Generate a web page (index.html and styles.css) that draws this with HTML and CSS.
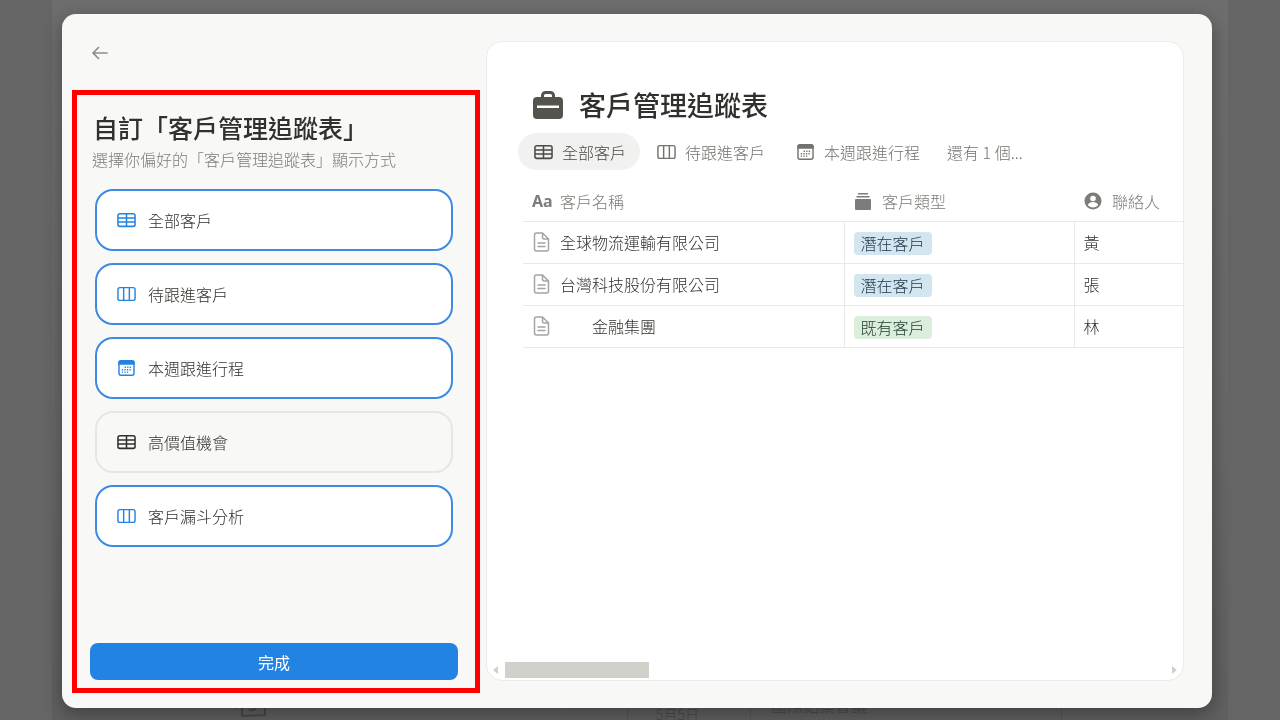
FILE: index.html
```
<!DOCTYPE html>
<html lang="zh-Hant">
<head>
    <meta charset="UTF-8">
    <meta name="viewport" content="width=device-width, initial-scale=1.0">
    <title>客戶管理追蹤表</title>
    <link rel="stylesheet" href="styles.css">
</head>
<body>
    <!-- shared icons -->
    <svg class="sprite" aria-hidden="true">
        <symbol id="icon-table" viewBox="0 0 20 16">
            <path d="M3 1.3h14a2 2 0 0 1 2 2v9.400a2 2 0 0 1-2 2H3a2 2 0 0 1-2-2V3.300a2 2 0 0 1 2-2zM1 5.800h18M1 10.200h18M10 1.300v13.400" fill="none" stroke="currentColor" stroke-width="1.6"/>
        </symbol>
        <symbol id="icon-board" viewBox="0 0 20 16">
            <path d="M3 1.300h14a2 2 0 0 1 2 2v9.400a2 2 0 0 1-2 2H3a2 2 0 0 1-2-2V3.300a2 2 0 0 1 2-2zM7 1.300v13.400M13 1.300v13.400" fill="none" stroke="currentColor" stroke-width="1.5"/>
        </symbol>
        <symbol id="icon-calendar" viewBox="0 0 20 18">
            <rect x="2.1" y="1.400" width="15.800" height="15.200" rx="2" fill="none" stroke="currentColor" stroke-width="1.5"/>
            <path d="M1.400 5.500V3a2 2 0 0 1 2-2h13.200a2 2 0 0 1 2 2v2.500z" fill="currentColor"/>
            <path d="M8 8.200h7M5 10.800h10M5 13.400h7" fill="none" stroke="currentColor" stroke-width="1.4" stroke-dasharray="1.4 1.3"/>
        </symbol>
        <symbol id="icon-page" viewBox="0 0 16 20">
            <path d="M3 1h6l6 6v10a2 2 0 0 1-2 2H3a2 2 0 0 1-2-2V3a2 2 0 0 1 2-2zM9 1v4.500A1.500 1.500 0 0 0 10.500 7H15M4.500 11h7M4.500 14.500h7" fill="none" stroke="currentColor" stroke-width="1.5" stroke-linecap="round" stroke-linejoin="round"/>
        </symbol>
    </svg>

    <div class="behind" aria-hidden="true">
        <div class="behind-row">
            <span class="behind-icon"><svg viewBox="0 0 32 22" width="32" height="22"><path d="M2 4v9M8 2v18l23-1V2M15 13c2 2 7 2 7-3" fill="none" stroke="currentColor" stroke-width="2"/></svg></span>
            <span>5月5日</span>
            <span>國際鋁業會議</span>
            <span></span>
        </div>
    </div>

    <main class="modal">
        <div class="side">
            <button class="back" aria-label="返回">
                <svg viewBox="0 0 16 14" width="16" height="14"><path d="M15 7H1.500M6.500 1.500L1 7l5.500 5.500" fill="none" stroke="currentColor" stroke-width="1.700" stroke-linecap="round" stroke-linejoin="round"/></svg>
            </button>
            <section class="setup">
                <h1>自訂「客戶管理追蹤表」</h1>
                <p>選擇你偏好的「客戶管理追蹤表」顯示方式</p>
                <div class="options">
                    <button class="option selected" aria-pressed="true"><svg class="icon"><use href="#icon-table"/></svg>全部客戶</button>
                    <button class="option selected" aria-pressed="true"><svg class="icon"><use href="#icon-board"/></svg>待跟進客戶</button>
                    <button class="option selected" aria-pressed="true"><svg class="icon"><use href="#icon-calendar"/></svg>本週跟進行程</button>
                    <button class="option" aria-pressed="false"><svg class="icon"><use href="#icon-table"/></svg>高價值機會</button>
                    <button class="option selected" aria-pressed="true"><svg class="icon"><use href="#icon-board"/></svg>客戶漏斗分析</button>
                </div>
                <button class="done">完成</button>
            </section>
        </div>

        <section class="preview">
            <h2>
                <svg viewBox="0 0 30 28" width="30" height="28"><path d="M9.500 8V4.500a3 3 0 0 1 3-3h5a3 3 0 0 1 3 3V8" fill="none" stroke="currentColor" stroke-width="3"/><path d="M4 6h22a4 4 0 0 1 4 4v4.500H0V10a4 4 0 0 1 4-4zM0 17h30v7a4 4 0 0 1-4 4H4a4 4 0 0 1-4-4z" fill="currentColor"/><path d="M0 14h4v4H0zM26 14h4v4h-4z" fill="currentColor"/></svg>
                客戶管理追蹤表
            </h2>
            <div class="tabs">
                <button class="tab active"><svg class="icon"><use href="#icon-table"/></svg>全部客戶</button>
                <button class="tab"><svg class="icon"><use href="#icon-board"/></svg>待跟進客戶</button>
                <button class="tab"><svg class="icon"><use href="#icon-calendar"/></svg>本週跟進行程</button>
                <button class="tab">還有 1 個...</button>
            </div>
            <div class="table-wrap">
                <table>
                    <thead>
                        <tr>
                            <th class="col-name"><div class="cell"><b>Aa</b>客戶名稱</div></th>
                            <th class="col-type"><div class="cell"><svg viewBox="0 0 16 18" width="18" height="18"><path d="M3 1h10v1.500H3zM1.500 4h13v1.500h-13zM1 7h14a1 1 0 0 1 1 1v9a1 1 0 0 1-1 1H1a1 1 0 0 1-1-1V8a1 1 0 0 1 1-1z" fill="currentColor"/></svg>客戶類型</div></th>
                            <th class="col-contact"><div class="cell"><svg viewBox="0 0 18 18" width="18" height="18"><circle cx="9" cy="9" r="8.500" fill="currentColor"/><circle cx="9" cy="6.500" r="2.800" fill="#fff"/><path d="M3.800 13c1-2.300 3-3 5.200-3s4.200.7 5.200 3c-1.200 1.500-3 2.400-5.200 2.400S5 14.500 3.800 13z" fill="#fff"/></svg>聯絡人</div></th>
                        </tr>
                    </thead>
                    <tbody>
                        <tr>
                            <td><div class="cell"><svg class="page"><use href="#icon-page"/></svg>全球物流運輸有限公司</div></td>
                            <td><span class="tag blue">潛在客戶</span></td>
                            <td>黃</td>
                        </tr>
                        <tr>
                            <td><div class="cell"><svg class="page"><use href="#icon-page"/></svg>台灣科技股份有限公司</div></td>
                            <td><span class="tag blue">潛在客戶</span></td>
                            <td>張</td>
                        </tr>
                        <tr>
                            <td><div class="cell"><svg class="page"><use href="#icon-page"/></svg>&emsp;&emsp;金融集團</div></td>
                            <td><span class="tag green">既有客戶</span></td>
                            <td>林</td>
                        </tr>
                    </tbody>
                </table>
            </div>
            <div class="scrollbar" aria-hidden="true">
                <span class="arrow left"></span>
                <span class="thumb"></span>
                <span class="arrow right"></span>
            </div>
        </section>
    </main>
</body>
</html>
```

FILE: styles.css
```
* { box-sizing: border-box; }
body {
    margin: 0;
    padding: 14px 68px 12px 62px;
    min-height: 100vh;
    display: flex;
    background: #666;
    color: #32302c;
    font: 300 16px/24px "Noto Sans CJK TC", sans-serif;
}
button { font: inherit; color: inherit; border: 0; background: none; padding: 0; cursor: pointer; }
h1, h2, p { margin: 0; }
svg { flex: none; }
.sprite { position: absolute; width: 0; height: 0; }
.icon { width: 19px; height: 18px; }

/* dimmed page under the dialog */
.behind {
    position: fixed;
    inset: 0 52px;
    display: flex;
    align-items: flex-end;
    overflow: hidden;
    background: linear-gradient(#6e6e6e, #6a6a6a 50%, #606060);
    color: #484848;
}
.behind-row { width: 100%; height: 24px; display: grid; grid-template-columns: 576px 123px 311px 1fr; font-size: 14px; line-height: 18px; }
.behind-row span { border-right: 1px solid #575757; padding-left: 20px; }
.behind-row span:last-child { border-right: 0; }
.behind-row span:nth-child(2) { padding: 12px 0 0 28px; line-height: 12px; }
.behind-row span:nth-child(3) { font-size: 16px; }
.behind-row .behind-icon { padding-left: 182px; }

.modal {
    position: relative;
    flex: 1;
    display: grid;
    grid-template-columns: 408px minmax(0, 1fr);
    gap: 6px;
    padding: 0 28px 0 10px;
    background: #f8f8f7;
    border-radius: 14px;
    box-shadow: 0 6px 20px rgba(0, 0, 0, 0.35);
}

/* left side */
.side { display: flex; flex-direction: column; padding-bottom: 15px; }
.back { width: 16px; height: 14px; margin: 32px 20px 30px; color: #8e8d8a; }
.back svg { display: block; }
.setup {
    flex: 1;
    display: flex;
    flex-direction: column;
    padding: 16px 17px 8px 13px;
    border: 5px solid #f00;
}
.setup h1 { padding-left: 3px; font-size: 25px; line-height: 32px; font-weight: 500; }
.setup p { padding: 4px 0 0 2px; color: #7d7c78; }
.options { display: flex; flex-direction: column; gap: 12px; margin: 18px 5px 24px; }
.option {
    height: 62px;
    display: flex;
    align-items: center;
    gap: 12px;
    padding-left: 20px;
    border: 2px solid #e6e6e3;
    border-radius: 18px;
}
.option.selected { background: #fff; border-color: #3d8ae5; }
.option.selected .icon { color: #2383e2; }
.done { height: 37px; margin-top: auto; border-radius: 8px; background: #2383e2; color: #fff; font-weight: 400; }

/* preview */
.preview {
    display: flex;
    flex-direction: column;
    margin: 27px 0;
    padding-top: 45px;
    background: #fff;
    border: 1px solid #ebebea;
    border-radius: 16px;
    overflow: hidden;
}
.preview h2 { display: flex; align-items: center; gap: 16px; padding-left: 46px; font-size: 27px; line-height: 36px; font-weight: 500; }
.preview h2 svg { color: #55534e; }
.tabs { display: flex; gap: 1px; padding-left: 31px; margin-top: 10px; }
.tab { display: flex; align-items: center; gap: 9px; height: 37px; padding: 0 14px 0 16px; border-radius: 19px; color: #73726e; white-space: nowrap; }
.tab.active { background: #f1f1f0; color: #4a4945; }
.tab:last-child { padding-left: 12px; }

.table-wrap { padding-left: 36px; margin-top: 11px; overflow: hidden; }
table { width: 100%; border-collapse: collapse; table-layout: fixed; }
th, td { height: 42px; padding: 0 9px; border-bottom: 1px solid #e9e9e7; text-align: left; }
th { height: 40px; padding-left: 10px; font-weight: 300; color: #7d7c78; }
.col-name { padding-left: 9px; width: 321px; }
.col-type { width: 230px; }
td + td { border-left: 1px solid #e9e9e7; }
.cell { display: flex; align-items: center; gap: 10px; white-space: nowrap; }
th b { width: 20px; font: 700 16px "Noto Sans", sans-serif; }
.col-name .cell { gap: 8px; }
.page { width: 19px; height: 20px; color: #a5a4a1; }
td .cell { gap: 9px; }
.tag { display: inline-block; height: 23px; line-height: 23px; padding: 0 7px; border-radius: 4px; vertical-align: middle; }
.blue { background: #d3e5ef; color: #183347; }
.green { background: #dbeddb; color: #1c3829; }

.scrollbar { display: flex; align-items: center; height: 16px; margin: auto 6px 2px; }
.thumb { width: 144px; height: 16px; margin-left: 7px; background: #d1d0ca; }
.arrow { border: 4px solid transparent; }
.arrow.left { border-left: 0; border-right: 5px solid #d1d0ca; }
.arrow.right { border-right: 0; border-left: 5px solid #d1d0ca; margin-left: auto; }
```
